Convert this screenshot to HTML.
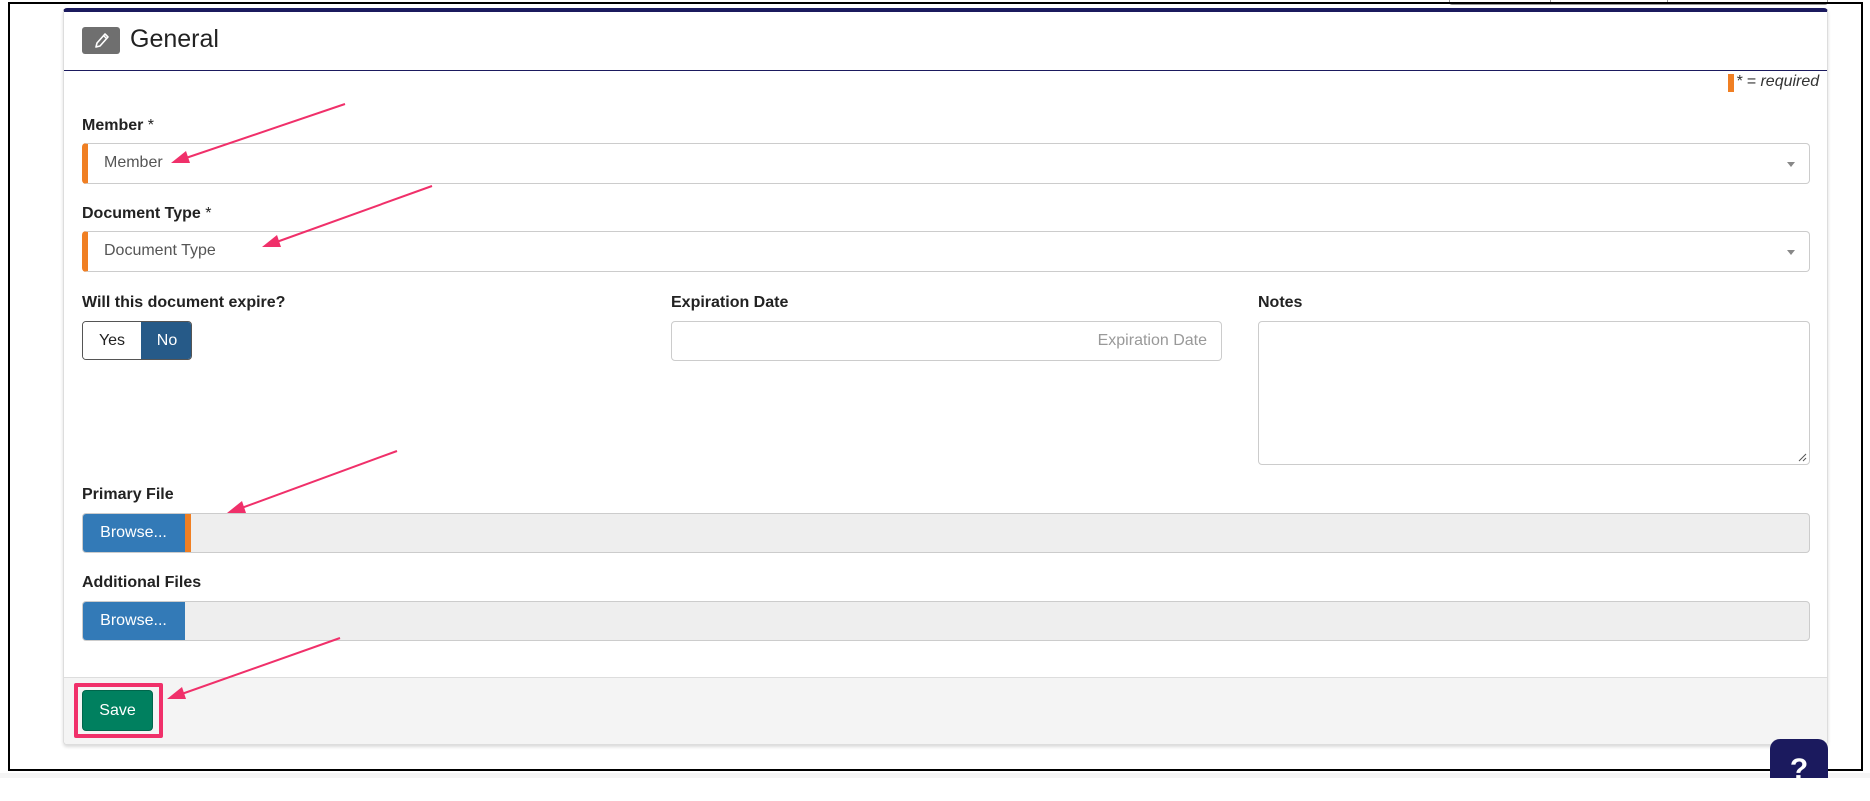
<!DOCTYPE html>
<html><head><meta charset="utf-8"><style>
*{box-sizing:border-box;margin:0;padding:0}
body{width:1870px;height:778px;background:#fff;position:relative;overflow:hidden;font-family:"Liberation Sans",Arial,sans-serif;color:#333}
.a{position:absolute}
.lbl{position:absolute;font-weight:bold;font-size:16px;color:#222}
.sel{position:absolute;left:82px;width:1728px;height:41px;border:1px solid #ccc;border-left:6px solid #f07f23;border-radius:4px;background:#fff;font-size:16px;color:#555;padding:10px 0 0 16px}
.caret{position:absolute;right:14px;top:18px;width:0;height:0;border-left:4px solid transparent;border-right:4px solid transparent;border-top:5px solid #888}
.file{position:absolute;left:82px;width:1728px;height:40px;background:#eee;border:1px solid #ccc;border-radius:4px;overflow:hidden}
.browse{position:absolute;left:-1px;top:-1px;height:40px;width:103px;background:#337ab7;color:#fff;font-size:16px;text-align:center;line-height:40px}
</style></head><body>
<div class="a" style="left:1449px;top:-4px;width:379px;height:9px;border:1px solid #999;border-radius:3px"></div>
<div class="a" style="left:1550px;top:0;width:1px;height:5px;background:#999"></div>
<div class="a" style="left:1667px;top:0;width:1px;height:5px;background:#999"></div>
<div class="a" style="left:8px;top:2px;width:1855px;height:769px;border:2px solid #000"></div>
<div class="a" style="left:0;top:773px;width:1870px;height:5px;background:#f5f5f5"></div>
<div class="a" style="left:63px;top:8px;width:1765px;height:737px;background:#fff;border:1px solid #ddd;border-top:4px solid #1b1a5e;border-radius:4px;box-shadow:0 2px 3px rgba(0,0,0,.15)"></div>
<div class="a" style="left:64px;top:677px;width:1763px;height:67px;background:#f4f4f4;border-top:1px solid #ddd;border-radius:0 0 4px 4px"></div>
<div class="a" style="left:64px;top:70px;width:1763px;height:1px;background:#1b1a5e"></div>
<div class="a" style="left:82px;top:27px;width:38px;height:27px;background:#6f6f6f;border-radius:3px">
<svg width="38" height="27" viewBox="0 0 38 27"><path d="M14 20 L15 16 L23 7 L26 10 L18 19 Z" fill="none" stroke="#fff" stroke-width="1.6" stroke-linejoin="round"/><path d="M21.5 8.5 L24.5 11.5" stroke="#fff" stroke-width="1.4"/></svg></div>
<div class="a" style="left:130px;top:25px;font-size:25px;color:#222">General</div>
<div class="a" style="left:1728px;top:74px;width:6px;height:18px;background:#f07f23"></div>
<div class="a" style="left:1736px;top:73px;font-size:16px;font-style:italic;color:#333">* = required</div>
<div class="lbl" style="left:82px;top:117px">Member <span style="font-weight:normal">*</span></div>
<div class="sel" style="top:143px">Member<div class="caret"></div></div>
<div class="lbl" style="left:82px;top:205px">Document Type <span style="font-weight:normal">*</span></div>
<div class="sel" style="top:231px">Document Type<div class="caret"></div></div>
<div class="lbl" style="left:82px;top:294px">Will this document expire?</div>
<div class="a" style="left:82px;top:321px;width:110px;height:39px;border:1px solid #555;border-radius:4px;overflow:hidden;font-size:16px">
<div class="a" style="left:0;top:0;width:58px;height:37px;background:#fff;color:#222;text-align:center;line-height:37px">Yes</div>
<div class="a" style="left:58px;top:0;width:52px;height:37px;background:#265a88;color:#fff;text-align:center;line-height:37px">No</div></div>
<div class="lbl" style="left:671px;top:294px">Expiration Date</div>
<div class="a" style="left:671px;top:321px;width:551px;height:40px;border:1px solid #ccc;border-radius:4px;font-size:16px;color:#999;text-align:right;padding:10px 14px 0 0">Expiration Date</div>
<div class="lbl" style="left:1258px;top:294px">Notes</div>
<div class="a" style="left:1258px;top:321px;width:552px;height:144px;border:1px solid #ccc;border-radius:4px">
<svg class="a" style="right:2px;bottom:2px" width="10" height="10"><path d="M9 2 L2 9 M9 6 L6 9" stroke="#555" stroke-width="1"/></svg></div>
<div class="lbl" style="left:82px;top:486px">Primary File</div>
<div class="file" style="top:513px"><div class="browse">Browse...</div><div class="a" style="left:102px;top:-1px;width:6px;height:40px;background:#f07f23"></div></div>
<div class="lbl" style="left:82px;top:574px">Additional Files</div>
<div class="file" style="top:601px"><div class="browse">Browse...</div></div>
<div class="a" style="left:74px;top:683px;width:89px;height:55px;border:4px solid #f0306a;border-radius:2px"></div>
<div class="a" style="left:82px;top:690px;width:71px;height:41px;background:#00805f;border:1px solid #00664b;border-radius:4px;color:#fff;font-size:16px;text-align:center;line-height:39px">Save</div>
<div class="a" style="left:1770px;top:739px;width:58px;height:39px;background:#1b1a5e;border-radius:10px 10px 0 0;color:#fff;font-weight:bold;font-size:30px;text-align:center;line-height:62px">?</div>
<svg class="a" style="left:0;top:0" width="1870" height="778">
<g stroke="#f0306a" stroke-width="2" fill="#f0306a">
<line x1="345" y1="104" x2="180" y2="160"/><polygon points="171,163 186,151 190,163" stroke="none"/>
<line x1="432" y1="186" x2="271" y2="244"/><polygon points="262,247 277,235 281,247" stroke="none"/>
<line x1="397" y1="451" x2="236" y2="510"/><polygon points="227,513 242,501 246,513" stroke="none"/>
<line x1="340" y1="638" x2="176" y2="696"/><polygon points="167,699 182,687 186,699" stroke="none"/>
</g></svg>
</body></html>
